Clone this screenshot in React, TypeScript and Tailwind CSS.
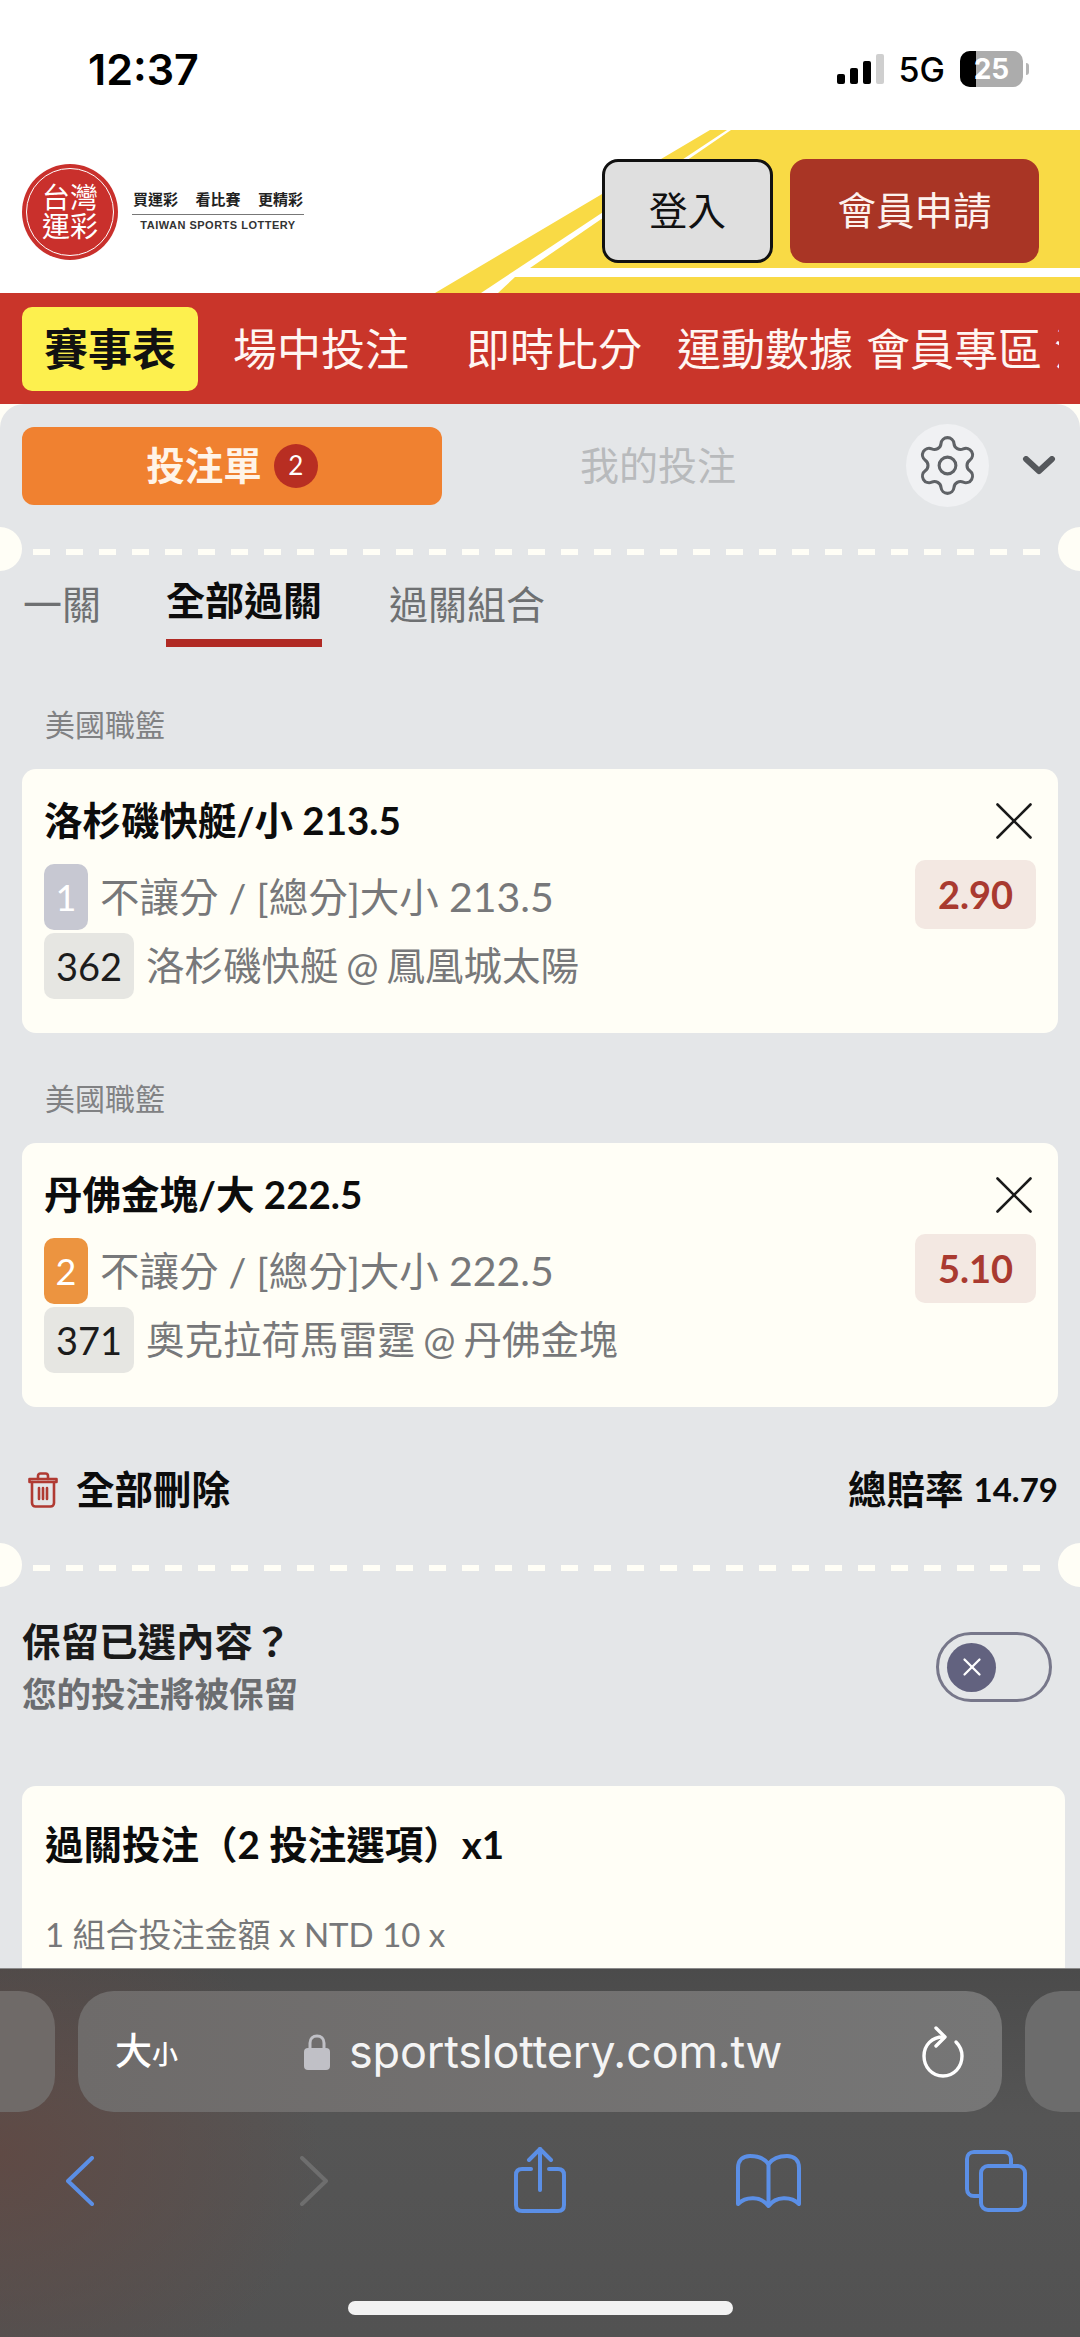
import React from 'react';
import { Settings, X } from 'lucide-react';

interface BetCardProps {
  title: string;
  total: string;
  leg: string;
  legColor: string;
  code: string;
  teams: string;
  odds: string;
}

const BetCard: React.FC<BetCardProps> = ({ title, total, leg, legColor, code, teams, odds }) => (
  <div>
    <div className="pl-[45px] h-[45px] flex items-center text-[30px] text-[#808183]">美國職籃</div>
    <div className="mx-[22px] mt-[22px] h-[264px] rounded-[14px] bg-[#fffef6] pl-[22px] pr-[22px] pt-[29px]">
      <div className="flex h-[46px] items-center justify-between">
        <span className="text-[38.5px] font-bold text-[#0c0c0c]">{title}</span>
        <X className="-my-[10px] -mr-[11px] h-[66px] w-[66px] shrink-0 text-[#1a1a1a]" strokeWidth={0.95} />
      </div>
      <div className="mt-[20px] flex items-start justify-between">
        <div className="flex flex-col gap-[3px]">
          <div className="flex h-[66px] items-center gap-[12px]">
            <span className={`flex h-[66px] w-[44px] items-center justify-center rounded-[10px] text-[36px] text-white ${legColor}`}>{leg}</span>
            <span className="text-[39.5px] text-[#77787a]">不讓分 / [總分]大小 <span className="text-[41px]">{total}</span></span>
          </div>
          <div className="flex h-[66px] items-center gap-[12px]">
            <span className="flex h-[66px] w-[90px] items-center justify-center rounded-[10px] bg-[#e6e6e2] text-[38px] text-[#1c1c1c]">{code}</span>
            <span className="text-[38.5px] text-[#77787a] [word-spacing:-2px]">{teams}</span>
          </div>
        </div>
        <div className="-mt-[4px] flex h-[69px] w-[121px] items-center justify-center rounded-[10px] bg-[#f3e8e2] text-[38px] font-bold text-[#a93a30]">{odds}</div>
      </div>
    </div>
  </div>
);

const Divider: React.FC = () => (
  <div className="relative h-[44px]">
    <div className="absolute -left-[22px] top-0 h-[44px] w-[44px] rounded-full bg-[#fffef6]" />
    <div className="absolute -right-[22px] top-0 h-[44px] w-[44px] rounded-full bg-[#fffef6]" />
    <div className="absolute left-[33px] right-[33px] top-[22px] h-[6px] bg-[repeating-linear-gradient(90deg,#fffef6_0_17px,transparent_17px_33px)]" />
  </div>
);

export default function App() {
  return (
    <div className="relative h-[2337px] w-[1080px] overflow-hidden bg-[#fffef6] font-['Lato','Noto_Sans_CJK_TC',sans-serif]">
      {/* status bar */}
      <div className="flex h-[130px] items-center justify-between bg-white pl-[88px] pr-[51px] pt-[8px] font-['Inter','Noto_Sans_CJK_TC',sans-serif]">
        <span className="text-[43px] font-semibold text-black">12:37</span>
        <div className="flex items-center">
          <div className="flex h-[30px] items-end gap-[5px]">
            <div className="h-[10px] w-[8px] rounded-[2px] bg-black" />
            <div className="h-[16px] w-[8px] rounded-[2px] bg-black" />
            <div className="h-[23px] w-[8px] rounded-[2px] bg-black" />
            <div className="h-[30px] w-[8px] rounded-[2px] bg-[#cfcfcf]" />
          </div>
          <span className="ml-[15px] text-[34px] font-medium text-black">5G</span>
          <div className="relative ml-[15px] flex h-[36px] w-[63px] items-center justify-center overflow-hidden rounded-[10px] bg-[#acacac]">
            <div className="absolute bottom-0 left-0 top-0 w-[16px] bg-black" />
            <span className="relative text-[28px] font-bold text-white">25</span>
          </div>
          <div className="ml-[3px] h-[12px] w-[3px] rounded-r-full bg-[#b5b5b5]" />
        </div>
      </div>

      {/* header */}
      <div className="relative flex h-[163px] items-center justify-between bg-white pl-[22px] pr-[41px]">
        <svg className="absolute inset-0 h-full w-full" viewBox="0 0 1080 163">
          <polygon points="710,0 727,0 481,163 435,163" fill="#f9da45" />
          <polygon points="731,0 1080,0 1080,138 530,138" fill="#f9da45" />
          <polygon points="515,147 1080,147 1080,163 498,163" fill="#f9da45" />
        </svg>
        <div className="relative flex items-center">
          <div className="relative flex h-[96px] w-[96px] items-center justify-center rounded-full bg-[#c9302c] text-center text-[28px] leading-[29px] text-white">
            <div className="absolute inset-[4px] rounded-full border-[1.5px] border-white" />
            <span>台灣<br />運彩</span>
          </div>
          <div className="ml-[14px] w-[172px]">
            <div className="flex h-[24px] items-start justify-between px-[1px] pt-[2px] text-[15px] font-bold leading-none text-[#222]">
              <span>買運彩</span>
              <span>看比賽</span>
              <span>更精彩</span>
            </div>
            <div className="border-t-[1.5px] border-[#777] pt-[2px] text-center font-['Liberation_Sans',sans-serif] text-[11px] font-bold leading-[16px] tracking-[0.5px] text-[#333]">TAIWAN SPORTS LOTTERY</div>
          </div>
        </div>
        <div className="relative -mt-[1px] flex gap-[17px] text-[38.5px]">
          <button className="h-[104px] w-[171px] rounded-[16px] border-[3px] border-[#111] bg-[#dfdfdf] text-[#111]">登入</button>
          <button className="h-[104px] w-[249px] rounded-[16px] bg-[#a93525] text-[#fdf2ee]">會員申請</button>
        </div>
      </div>

      {/* nav */}
      <div className="flex h-[111px] items-center bg-[#c9352a] pl-[22px]">
        <div className="flex w-[1037px] items-center overflow-hidden whitespace-nowrap text-[44px] text-[#fff6f2]">
          <div className="flex h-[84px] w-[176px] shrink-0 items-center justify-center rounded-[10px] bg-[#fdf04e] font-bold text-[#111]">賽事表</div>
          <span className="ml-[35px] shrink-0">場中投注</span>
          <span className="ml-[57px] shrink-0">即時比分</span>
          <span className="ml-[35px] shrink-0">運動數據</span>
          <span className="ml-[13px] shrink-0">會員專區</span>
          <span className="ml-[12px] shrink-0">注意</span>
        </div>
      </div>

      {/* bet slip */}
      <div className="overflow-hidden rounded-t-[24px] bg-[#e4e6e8]">
        <div className="mt-[20px] flex h-[83px] items-center pl-[22px]">
          <div className="flex h-[78px] w-[420px] items-center justify-center rounded-[12px] bg-[#f08130]">
            <span className="text-[38.5px] font-bold text-[#fff4e8]">投注單</span>
            <span className="ml-[12px] flex h-[44px] w-[44px] items-center justify-center rounded-full bg-[#b82e22] text-[26px] text-white">2</span>
          </div>
          <span className="ml-[138px] text-[39px] text-[#b8babc]">我的投注</span>
          <div className="ml-[170px] flex h-[83px] w-[83px] items-center justify-center rounded-full bg-[#f0f1f3]">
            <Settings className="h-[67px] w-[67px] text-[#5f6266]" strokeWidth={1.1} />
          </div>
          <svg className="ml-[31px] h-[20px] w-[36px]" viewBox="0 0 36 20" fill="none" stroke="#55585c" strokeWidth="6" strokeLinecap="round" strokeLinejoin="round">
            <path d="M6 3 L19 15 L32 3" />
          </svg>
        </div>

        <div className="mt-[20px]">
          <Divider />
        </div>

        <div className="flex h-[76px] pl-[23px] text-[39px] text-[#6e7072]">
          <span className="mt-[4px]">一關</span>
          <div className="ml-[65px] w-[156px] border-b-[8px] border-[#b02a24]">
            <span className="block h-[58px] font-bold leading-[58px] text-[#0c0c0c]">全部過關</span>
          </div>
          <span className="ml-[67px] mt-[4px]">過關組合</span>
        </div>

        <div className="mt-[55px] flex flex-col gap-[43px]">
          <BetCard title="洛杉磯快艇/小 213.5" total="213.5" leg="1" legColor="bg-[#c7c8d2]" code="362" teams="洛杉磯快艇 @ 鳳凰城太陽" odds="2.90" />
          <BetCard title="丹佛金塊/大 222.5" total="222.5" leg="2" legColor="bg-[#ec9440]" code="371" teams="奧克拉荷馬雷霆 @ 丹佛金塊" odds="5.10" />
        </div>

        <div className="mt-[59px] flex h-[48px] items-center justify-between pl-[28px] pr-[22px]">
          <div className="flex items-center">
            <svg className="h-[36px] w-[30px]" viewBox="0 0 30 36" fill="none" stroke="#b03a32" strokeWidth="2.6" strokeLinecap="round" strokeLinejoin="round">
              <path d="M1.5 7 H28.5 V10 H1.5 Z" />
              <path d="M10 7 V4 C10 2.5 11 1.5 12.5 1.5 H17.5 C19 1.5 20 2.5 20 4 V7" />
              <path d="M4 10 V31 C4 33 5.5 34.5 7.5 34.5 H22.5 C24.5 34.5 26 33 26 31 V10" />
              <path d="M11 16 V27 M15 16 V27 M19 16 V27" />
            </svg>
            <span className="ml-[18px] text-[38.5px] font-bold text-[#0c0c0c]">全部刪除</span>
          </div>
          <div className="flex items-center">
            <span className="text-[38.5px] font-bold text-[#0c0c0c]">總賠率</span>
            <span className="ml-[10px] text-[33px] font-bold text-[#0c0c0c]">14.79</span>
          </div>
        </div>

        <div className="mt-[29px]">
          <Divider />
        </div>

        <div className="mt-[26px] flex items-start justify-between pl-[22px] pr-[28px]">
          <div>
            <div className="h-[56px] text-[38.5px] font-bold leading-[56px] text-[#1a1a1a]">保留已選內容？</div>
            <div className="h-[50px] text-[34.5px] font-bold leading-[50px] text-[#6b6d70]">您的投注將被保留</div>
          </div>
          <div className="mt-[19px] flex h-[70px] w-[116px] items-center rounded-full border-[3px] border-[#77778a] pl-[8px]">
            <span className="flex h-[49px] w-[49px] items-center justify-center rounded-full bg-[#62627f]">
              <X className="h-[30px] w-[30px] text-white" strokeWidth={1.8} />
            </span>
          </div>
        </div>

        <div className="ml-[22px] mt-[67px] h-[300px] w-[1043px] rounded-[14px] bg-[#fffef6] pl-[23px] pt-[34px]">
          <div className="h-[48px] text-[38.5px] font-bold leading-[48px] text-[#0c0c0c]">過關投注（2 投注選項）x1</div>
          <div className="mt-[42px] text-[33px] leading-[48px] text-[#77787a]">1 組合投注金額 x NTD 10 x</div>
        </div>
      </div>

      {/* safari toolbar, sits over the page */}
      <div className="absolute bottom-0 left-0 right-0 h-[369px] border-t border-[#8a8a8a] bg-[radial-gradient(ellipse_320px_260px_at_0%_50%,#5f4a45,transparent),linear-gradient(180deg,#4b4b4b,#555555_40%,#525252)] pt-[22px]">
        <div className="flex h-[121px] gap-[23px] font-['Inter','Noto_Sans_CJK_TC',sans-serif]">
          <div className="h-full w-[55px] rounded-r-[36px] bg-[#6f6a68]" />
          <div className="flex h-full w-[924px] items-center rounded-[36px] bg-[linear-gradient(90deg,#6e6b6a,#767676)] pl-[37px] pr-[38px] text-white">
            <span className="text-[37px] font-medium leading-none">大</span>
            <span className="mt-[6px] text-[26px] font-medium leading-none">小</span>
            <svg className="ml-[126px] h-[36px] w-[26px]" viewBox="0 0 26 36">
              <path d="M6 15 V9 C6 4.5 9 2 13 2 C17 2 20 4.5 20 9 V15" fill="none" stroke="#c0c0c6" strokeWidth="3" />
              <rect x="0" y="14" width="26" height="22" rx="4" fill="#c0c0c6" />
            </svg>
            <span className="ml-[19px] text-[45px] tracking-[-0.2px] text-[#f4f4f4]">sportslottery.com.tw</span>
            <svg className="ml-auto h-[52px] w-[42px]" viewBox="0 0 42 52" fill="none" stroke="#fff" strokeWidth="3.4" strokeLinecap="round" strokeLinejoin="round">
              <path d="M21 11 C10 11 2 19 2 30 C2 41 10 50 21 50 C32 50 40 41 40 30 C40 24 38 20 34 16" />
              <path d="M14 2 L23 11 L14 20" />
            </svg>
          </div>
          <div className="h-full w-[55px] rounded-l-[36px] bg-[#6c6c6c]" />
        </div>

        <div className="relative mt-[34px] flex h-[70px] items-center">
          <svg className="ml-[66px] h-[50px] w-[28px]" viewBox="0 0 28 50" fill="none" stroke="#5b8fe6" strokeWidth="4" strokeLinecap="round" strokeLinejoin="round">
            <path d="M26 2 L2 25 L26 48" />
          </svg>
          <svg className="ml-[206px] h-[50px] w-[28px]" viewBox="0 0 28 50" fill="none" stroke="#6e6e6e" strokeWidth="4" strokeLinecap="round" strokeLinejoin="round">
            <path d="M2 2 L26 25 L2 48" />
          </svg>
          <svg className="ml-[186px] -mt-[2px] h-[66px] w-[52px]" viewBox="0 0 52 66" fill="none" stroke="#5b8fe6" strokeWidth="4" strokeLinecap="round" strokeLinejoin="round">
            <path d="M26 2 V43" />
            <path d="M15 13 L26 2 L37 13" />
            <path d="M17 22 H8 C4 22 2 24 2 28 V58 C2 62 4 64 8 64 H44 C48 64 50 62 50 58 V28 C50 24 48 22 44 22 H35" />
          </svg>
          <svg className="ml-[170px] h-[54px] w-[65px]" viewBox="0 0 65 54" fill="none" stroke="#5b8fe6" strokeWidth="4" strokeLinecap="round" strokeLinejoin="round">
            <path d="M32.5 10 C28 4 22 2 14 2 C7 2 2 6 2 14 V50 C10 42 25 42 32.5 52 C40 42 55 42 63 50 V14 C63 6 58 2 51 2 C43 2 37 4 32.5 10 Z" />
            <path d="M32.5 10 V50" />
          </svg>
          <svg className="ml-[164px] h-[62px] w-[62px]" viewBox="0 0 62 62" fill="none" stroke="#5b8fe6" strokeWidth="4" strokeLinecap="round" strokeLinejoin="round">
            <path d="M46 15 V9 C46 5 43 2 39 2 H9 C5 2 2 5 2 9 V39 C2 43 5 46 9 46 H15" />
            <rect x="16" y="16" width="44" height="44" rx="7" />
          </svg>
        </div>

        <div className="absolute bottom-[22px] left-[348px] h-[14px] w-[385px] rounded-full bg-[#f2f2f2]" />
      </div>
    </div>
  );
}
